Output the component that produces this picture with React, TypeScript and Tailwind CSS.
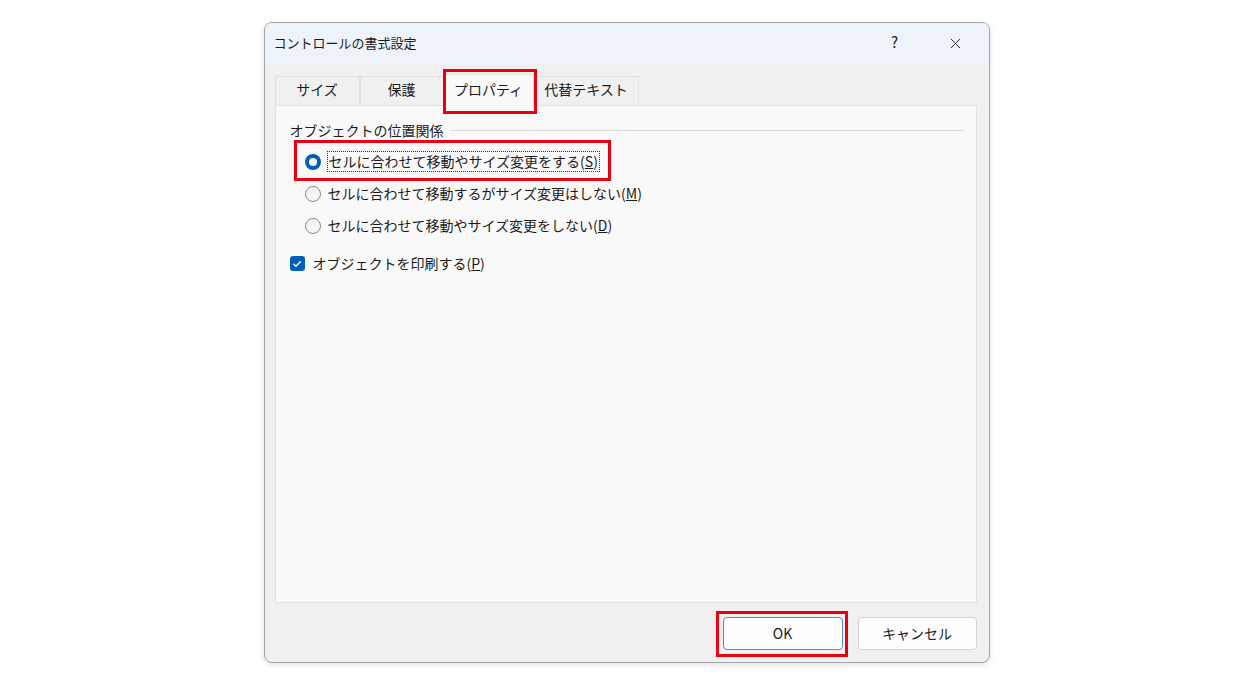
import { X } from "lucide-react";

const font = "font-['Noto_Sans_CJK_JP','Noto_Sans',sans-serif]";

function Radio({ checked }: { checked?: boolean }) {
  return checked ? (
    <span className="w-[16px] h-[16px] rounded-full bg-[#005fb8] flex items-center justify-center shrink-0">
      <span className="w-[8px] h-[8px] rounded-full bg-white" />
    </span>
  ) : (
    <span className="w-[16px] h-[16px] rounded-full border border-[#8b8b8b] bg-[#f5f5f5] shrink-0" />
  );
}

export default function App() {
  const tabs = [
    { label: "サイズ", w: "w-[85px]" },
    { label: "保護", w: "w-[84px]" },
    { label: "プロパティ", w: "w-[90px]", active: true },
    { label: "代替テキスト", w: "w-[105px]" },
  ];

  return (
    <div className={`min-h-screen bg-white flex justify-center ${font} text-[#1b1b1b]`}>
      <div className="mt-[22px] w-[726px] h-[641px] flex flex-col border border-[#a3a3a3] rounded-[8px] overflow-hidden bg-[#f0f0f0] shadow-[0_2px_6px_rgba(0,0,0,0.12)]">

        {/* Title bar */}
        <div className="h-[40px] bg-[#eef3f9] flex items-center pl-[9px] shrink-0">
          <span className="text-[13px]">コントロールの書式設定</span>
          <div className="ml-auto flex items-center h-full">
            <span className="w-[46px] text-center text-[15px] mt-[-2px] mr-[15px]">?</span>
            <span className="w-[46px] flex justify-center mr-[10px]">
              <X size={17} strokeWidth={1.3} />
            </span>
          </div>
        </div>

        {/* Body */}
        <div className="flex-1 flex flex-col pl-[10px] pr-[12px] pt-[13px]">

          {/* Tabs */}
          <div className="flex h-[29px] items-end">
            {tabs.map((t) =>
              t.active ? (
                <div
                  key={t.label}
                  className={`relative ${t.w} h-[32px] pb-[3px] bg-[#f9f9f9] border border-b-0 border-[#e3e3e3] flex items-center justify-center text-[14px] z-10 -mb-px`}
                >
                  {t.label}
                  <span className="absolute left-[-2px] right-[-4px] top-[-6px] bottom-[-8px] border-[3px] border-[#e60012]" />
                </div>
              ) : (
                <div
                  key={t.label}
                  className={`${t.w} h-[29px] pb-[3px] border border-b-0 border-[#e3e3e3] flex items-center justify-center text-[14px]`}
                >
                  {t.label}
                </div>
              )
            )}
          </div>

          {/* Panel */}
          <div className="h-[498px] bg-[#f9f9f9] border border-[#e3e3e3] pl-[14px] pr-[12px] pt-[14px] text-[14px]">

            <div className="flex items-center gap-[6px]">
              <span>オブジェクトの位置関係</span>
              <span className="flex-1 h-px bg-[#dcdcdc]" />
            </div>

            <div className="pl-[15px] mt-[10px] flex flex-col gap-[11px]">
              <div className="relative flex items-center gap-[6px] h-[21px]">
                <Radio checked />
                <span className="border border-dotted border-[#333] px-px leading-[19px]">
                  セルに合わせて移動やサイズ変更をする(<u>S</u>)
                </span>
                <span className="absolute left-[-11px] top-[-11px] w-[317px] h-[41px] border-[3px] border-[#e60012]" />
              </div>
              <div className="flex items-center gap-[7px] h-[21px]">
                <Radio />
                <span>セルに合わせて移動するがサイズ変更はしない(<u>M</u>)</span>
              </div>
              <div className="flex items-center gap-[7px] h-[21px]">
                <Radio />
                <span>セルに合わせて移動やサイズ変更をしない(<u>D</u>)</span>
              </div>
            </div>

            <div className="mt-[17px] flex items-center gap-[8px]">
              <span className="w-[15px] h-[15px] rounded-[3px] bg-[#005fb8] flex items-center justify-center">
                <svg width="10" height="10" viewBox="0 0 10 10" fill="none">
                  <path d="M1.8 5.2 L4 7.3 L8.3 2.8" stroke="white" strokeWidth="1.3" strokeLinecap="round" strokeLinejoin="round" />
                </svg>
              </span>
              <span>オブジェクトを印刷する(<u>P</u>)</span>
            </div>
          </div>

          {/* Footer */}
          <div className="flex justify-end gap-[15px] pt-[14px]">
            <div className="relative">
              <button className="w-[120px] h-[33px] bg-[#fdfdfd] border border-[#5c88b8] rounded-[4px] text-[14px]">
                OK
              </button>
              <span className="absolute left-[-7px] right-[-5px] top-[-6px] bottom-[-7px] border-[3px] border-[#e60012]" />
            </div>
            <button className="w-[119px] h-[33px] bg-[#fdfdfd] border border-[#d5d5d5] rounded-[4px] text-[14px]">
              キャンセル
            </button>
          </div>
        </div>
      </div>
    </div>
  );
}
